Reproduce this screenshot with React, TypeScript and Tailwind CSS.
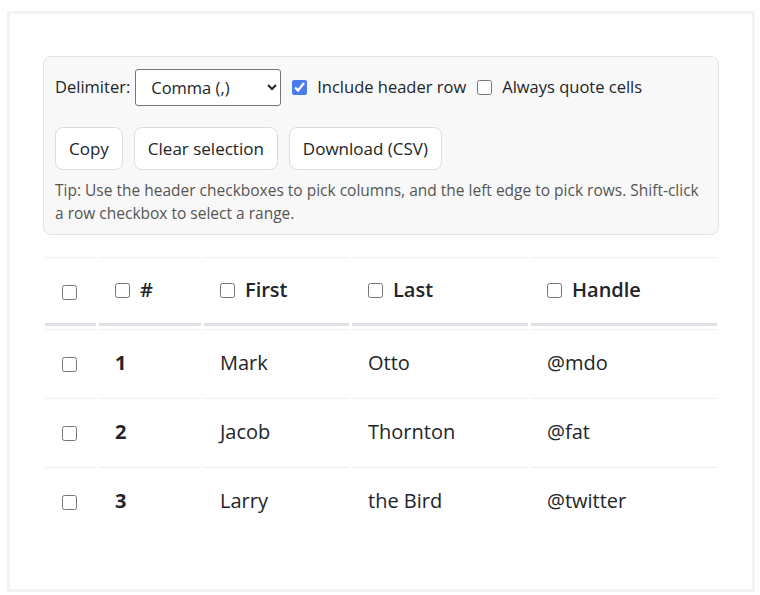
import React, { useState } from "react";

const rows = [
  { id: 1, first: "Mark", last: "Otto", handle: "@mdo" },
  { id: 2, first: "Jacob", last: "Thornton", handle: "@fat" },
  { id: 3, first: "Larry", last: "the Bird", handle: "@twitter" },
];

const cols = ["#", "First", "Last", "Handle"];

export default function App() {
  const [delim, setDelim] = useState(",");
  const [header, setHeader] = useState(true);
  const [quote, setQuote] = useState(false);

  const cb = "w-[15px] h-[15px] accent-[#4a7cf0] align-middle";

  return (
    <div className="bg-white min-h-[595px] pt-[11px] pl-[7px] font-['Segoe_UI','Open_Sans',sans-serif] text-[#212529]">
      <div className="w-[748px] h-[581px] border-[3px] border-[#f3f3f5] px-[33px] pt-[42px]">
        {/* toolbar */}
        <div className="bg-[#f8f8f8] border border-[#e3e3e3] rounded-lg px-[11px] pt-[12px] pb-[9px]">
          <div className="flex items-center gap-[5px] text-[16.5px]">
            <label>Delimiter:</label>
            <select
              value={delim}
              onChange={(e) => setDelim(e.target.value)}
              className="h-[37px] w-[146px] border border-[#767676] rounded-[3px] bg-white pl-[11px] pr-2 text-[16.5px]"
            >
              <option value=",">Comma (,)</option>
              <option value=";">Semicolon (;)</option>
              <option value="\t">Tab</option>
            </select>
            <label className="flex items-center gap-[10px] ml-[6px]">
              <input type="checkbox" className={cb} checked={header} onChange={(e) => setHeader(e.target.checked)} />
              Include header row
            </label>
            <label className="flex items-center gap-[10px] ml-[6px]">
              <input type="checkbox" className={cb} checked={quote} onChange={(e) => setQuote(e.target.checked)} />
              Always quote cells
            </label>
          </div>
          <div className="flex gap-[11px] mt-[21px]">
            {["Copy", "Clear selection", "Download (CSV)"].map((b) => (
              <button
                key={b}
                className="h-[43px] px-[13px] bg-white border border-[#dcdcdc] rounded-lg text-[17px]"
              >
                {b}
              </button>
            ))}
          </div>
          <p className="mt-[9px] text-[15.5px] leading-[23px] text-[#555]">
            Tip: Use the header checkboxes to pick columns, and the left edge to pick rows. Shift-click a row checkbox to select a range.
          </p>
        </div>

        {/* table */}
        <table className="mt-[19px] w-[678px] -ml-px border-separate border-spacing-[3px] text-[20px]">
          <thead>
            <tr>
              <th className="w-[51px] border-t border-b-[3px] border-t-[#eeeeee] border-b-[#dee2e6] h-[69px] text-left pl-[17px]">
                <input type="checkbox" className={cb} />
              </th>
              {cols.map((c, i) => (
                <th
                  key={c}
                  className={`border-t border-b-[3px] border-t-[#eeeeee] border-b-[#dee2e6] text-left px-[16px] font-semibold ${
                    i === 0 ? "w-[102px]" : i === 1 ? "w-[145px]" : i === 2 ? "w-[176px]" : ""
                  }`}
                >
                  <span className="inline-flex items-center gap-[10px]">
                    <input type="checkbox" className={cb} />
                    {c}
                  </span>
                </th>
              ))}
            </tr>
          </thead>
          <tbody>
            {rows.map((r) => (
              <tr key={r.id}>
                <td className="border-t border-[#eeeeee] h-[66px] pl-[17px]">
                  <input type="checkbox" className={cb} />
                </td>
                <td className="border-t border-[#eeeeee] px-[16px] font-bold">{r.id}</td>
                <td className="border-t border-[#eeeeee] px-[16px]">{r.first}</td>
                <td className="border-t border-[#eeeeee] px-[16px]">{r.last}</td>
                <td className="border-t border-[#eeeeee] px-[16px]">{r.handle}</td>
              </tr>
            ))}
          </tbody>
        </table>
      </div>
    </div>
  );
}
